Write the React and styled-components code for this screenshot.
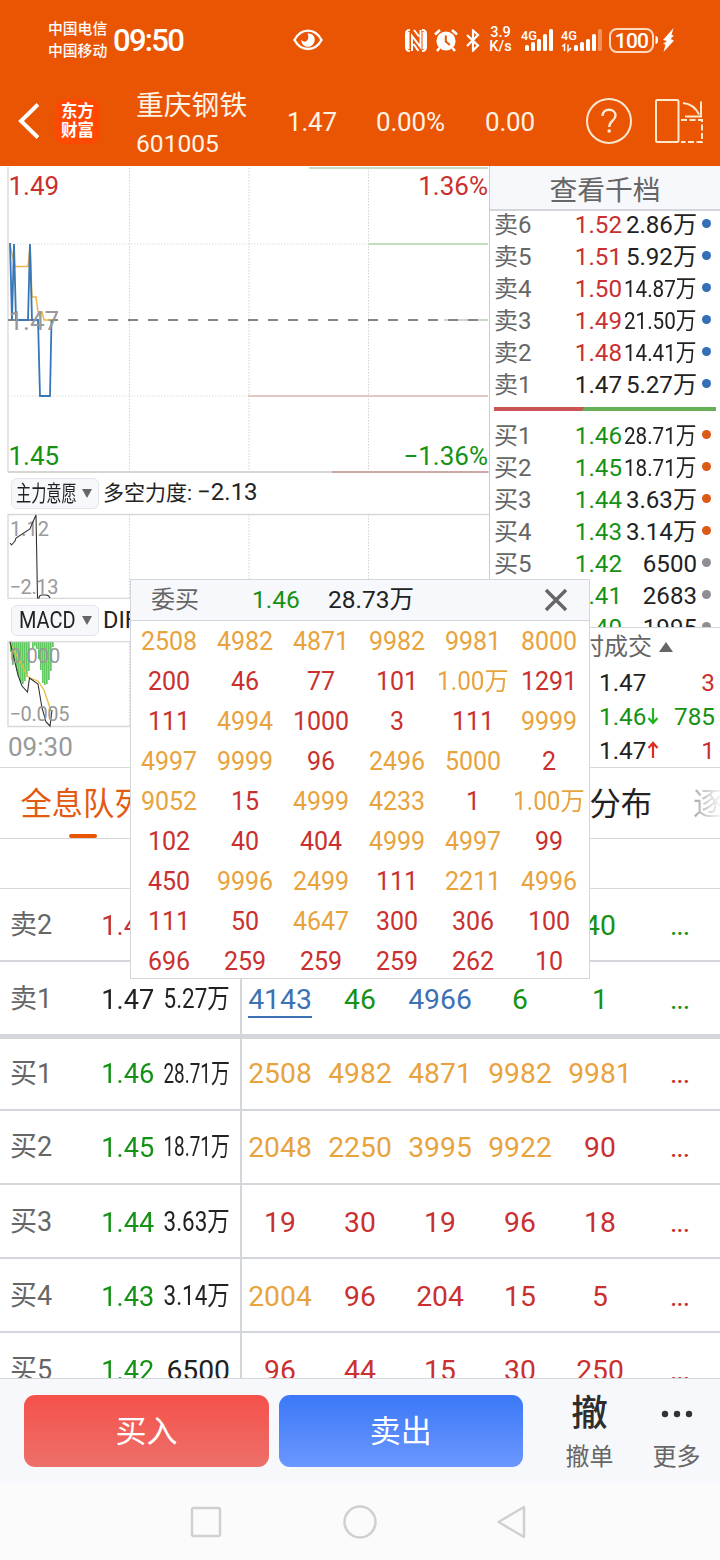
import React from 'react';
import styled, { createGlobalStyle, css } from 'styled-components';

const colors = {
  brand: '#ea5504',
  red: '#c9302f',
  green: '#159215',
  amber: '#e8a33d',
  blue: '#3c72b4',
  text: '#222',
  muted: '#666',
  faint: '#999',
  line: '#d3d6da',
  panel: '#f6f8fb',
};

const GlobalStyle = createGlobalStyle`
  * { box-sizing: border-box; }
  body {
    margin: 0;
    background: #fff;
    color: ${colors.text};
    font-family: Roboto, 'Noto Sans CJK SC', sans-serif;
  }
  svg { display: block; flex: none; }
`;

const Screen = styled.div`
  position: relative;
  width: 720px;
  height: 1560px;
  overflow: hidden;
  display: flex;
  flex-direction: column;
  white-space: nowrap;
`;

/* ---------- header ---------- */

const Header = styled.header`
  height: 166px;
  flex: none;
  background: ${colors.brand};
  color: #fff3e6;
`;

const StatusBar = styled.div`
  height: 80px;
  display: flex;
  align-items: center;
  padding-left: 48px;
  color: #fff;
`;

const Carriers = styled.div`
  width: 65px;
  font-size: 14.8px;
  font-weight: 500;
  line-height: 22.5px;
`;

const Clock = styled.div`
  width: 180px;
  font-size: 31px;
  font-weight: 500;
  letter-spacing: -1.7px;
  line-height: 36px;
  padding-top: 2px;
`;

const StatusIcons = styled.div`
  display: flex;
  align-items: center;
  margin-left: 82px;
`;

const Gap = styled.span`
  width: ${p => p.$width}px;
  flex: none;
`;

const Speed = styled.div`
  width: 29px;
  margin-left: 6px;
  margin-right: 3px;
  font-size: 14.5px;
  font-weight: 500;
  line-height: 14px;
  text-align: center;
`;

const Battery = styled.div`
  width: 45px;
  height: 25px;
  border: 2px solid #ffd9bd;
  border-radius: 8px;
  font-size: 21px;
  font-weight: 500;
  line-height: 22px;
  letter-spacing: -0.8px;
  text-align: center;
`;

const TitleBar = styled.div`
  height: 86px;
  display: flex;
  align-items: center;
  padding: 0 16px 4px 18px;
`;

const Logo = styled.div`
  width: 45px;
  height: 45px;
  margin-left: 16px;
  padding-top: 3px;
  border-radius: 11px;
  background: #ff4800;
  color: #fff;
  font-size: 16.5px;
  font-weight: 700;
  line-height: 19.5px;
  text-align: center;
`;

const StockName = styled.div`
  width: 151px;
  margin-left: 36px;
  font-size: 27.8px;
  line-height: 38px;
  padding-top: 8px;

  small {
    display: block;
    font-size: 24.6px;
  }
`;

const Quote = styled.div`
  width: ${p => p.$width}px;
  padding-top: 2px;
  font-size: 26px;
  letter-spacing: -0.2px;
  line-height: 32px;
`;

/* ---------- chart area ---------- */

const Market = styled.section`
  display: flex;
  height: 602px;
  flex: none;
  border-bottom: 1px solid ${colors.line};
`;

const Charts = styled.div`
  width: 490px;
  border-right: 1px solid #ccc;
`;

const IndicatorBar = styled.div`
  height: ${p => p.$height}px;
  display: flex;
  align-items: center;
  padding-left: 11px;
`;

const Picker = styled.div`
  width: 88px;
  height: 31px;
  margin-right: 4px;
  padding: 0 6px 0 ${p => p.$indent}px;
  display: flex;
  align-items: center;
  justify-content: space-between;
  border: 1px solid #e3e5ea;
  border-radius: 6px;
  background: ${colors.panel};
`;

const Squeezed = styled.span`
  display: inline-block;
  transform: scaleX(${p => p.$by});
  transform-origin: ${p => p.$origin || 'right'} center;
`;

const PickerLabel = styled.div`
  width: 60px;
  font-size: ${p => p.$size}px;
  line-height: 29px;
`;

const Reading = styled.div`
  padding-bottom: 2px;
  font-size: 21px;
  line-height: 30px;

  b {
    margin-left: 5px;
    font-size: 24px;
    font-weight: 400;
  }
`;

const TimeAxis = styled.div`
  height: 36px;
  padding-left: 8px;
  font-size: 26px;
  line-height: 38px;
  color: ${colors.faint};
`;

/* ---------- order book ---------- */

const Book = styled.div`
  width: 230px;
  display: flex;
  flex-direction: column;
`;

const DepthLink = styled.div`
  height: 45px;
  flex: none;
  border-bottom: 2px solid ${colors.line};
  background: ${colors.panel};
  color: ${colors.muted};
  font-size: 27.8px;
  line-height: 50px;
  text-align: center;
`;

const Levels = styled.div`
  height: ${p => p.$height}px;
  flex: none;
  margin-top: ${p => p.$shift || 0}px;
  overflow: hidden;
`;

const Level = styled.div`
  height: 32px;
  display: grid;
  grid-template-columns: 50px 78px 75px 1fr;
  padding-left: 4px;
  font-size: 24.5px;
  line-height: 32px;
`;

const LevelName = styled.span`
  font-size: 24px;
  line-height: 33px;
  color: ${colors.muted};
`;

const RightCell = styled.span`
  display: flex;
  justify-content: flex-end;
  color: ${p => p.$color || colors.text};
  font-size: ${p => p.$size || 24.5}px;
`;

const Dot = styled.i`
  width: 9px;
  height: 9px;
  margin: 10px 0 0 5px;
  border-radius: 50%;
  background: ${p => p.$color};
`;

const Balance = styled.div`
  height: 4px;
  flex: none;
  margin: 6px 4px 9px;
  background: linear-gradient(120deg, #cb5554 40%, #67b057 40.5%);
`;

const TradesHead = styled.div`
  height: 38px;
  flex: none;
  display: flex;
  align-items: center;
  gap: 7px;
  padding-left: 66px;
  border-top: 1px solid ${colors.line};
  color: ${colors.muted};
  font-size: 24px;
  line-height: 36px;
`;

const Trade = styled.div`
  height: 34px;
  display: flex;
  align-items: center;
  padding: 0 5px 0 109px;
  color: ${p => p.$color};
  font-size: 24.3px;
`;

const TradeQty = styled.span`
  margin-left: auto;
  color: ${p => p.$color};
`;

/* ---------- tabs ---------- */

const Tabs = styled.nav`
  height: 71px;
  flex: none;
  display: flex;
  justify-content: space-between;
  padding-left: 20.5px;
  border-bottom: 1px solid ${colors.line};
  font-size: 31.3px;
  line-height: 73px;
`;

const Tab = styled.div`
  display: flex;
  flex-direction: column;
  align-items: center;
  ${p =>
    p.$active &&
    css`
      color: #e35a12;

      &::after {
        content: '';
        width: 28px;
        height: 4px;
        margin-top: -7px;
        border-radius: 2px;
        background: ${colors.brand};
      }
    `}
`;

const FadingTab = styled.div`
  width: 27px;
  margin-left: 41px;
  overflow: hidden;
  color: transparent;
  background: linear-gradient(90deg, #aaa, #f4f4f4);
  background-clip: text;
`;

const TabGroup = styled.div`
  display: flex;
`;

/* ---------- queue table ---------- */

const Queue = styled.section`
  height: 539px;
  flex: none;
  overflow: hidden;
  padding-top: 49px;
`;

const QueueRows = styled.div`
  border-top: 1px solid ${colors.line};
`;

const QueueRow = styled.div`
  height: ${p => p.$height || 74}px;
  display: grid;
  grid-template-columns: 90px 54px 76px 12px repeat(6, 80px);
  padding-left: 10px;
  margin-right: -20px;
  border-bottom: ${p => (p.$thick ? 5 : 2)}px solid ${colors.line};
  font-size: 28.3px;
  line-height: ${p => p.$line || 73}px;
`;

const QueueName = styled.span`
  font-size: 27px;
  color: ${colors.muted};
`;

const Divider = styled.span`
  width: 2px;
  background: ${colors.line};
  margin-left: 10px;
`;

const QueueCell = styled.span`
  text-align: center;
  margin: 0 0 0 -4px;
  color: ${p => p.$color};

  u {
    text-decoration: none;
    border-bottom: 2px solid ${colors.blue};
  }
`;

const MoreCell = styled.span`
  margin: 2px 0 -4px -4px;
  font-size: 23px;
  font-weight: 500;
  text-align: center;
  color: ${p => p.$color};
`;

/* ---------- popup ---------- */

const Popup = styled.div`
  position: absolute;
  left: 130px;
  top: 579px;
  width: 460px;
  height: 400px;
  overflow: hidden;
  border: 1px solid ${colors.line};
  background: #fff;
`;

const PopupHead = styled.div`
  height: 41px;
  display: flex;
  align-items: center;
  padding: 0 21px 0 20px;
  border-bottom: 1px solid ${colors.line};
  background: ${colors.panel};
  font-size: 25px;
  line-height: 42px;
`;

const HeadText = styled.span`
  width: ${p => p.$width}px;
  font-size: ${p => p.$size || 24.5}px;
  color: ${p => p.$color};
`;

const Orders = styled.div`
  display: grid;
  grid-template-columns: repeat(6, 76px);
  grid-auto-rows: 40px;
  font-size: 25px;
  line-height: 42px;
  text-align: center;
`;

const Order = styled.span`
  display: flex;
  justify-content: center;
  color: ${p => p.$color};
`;

/* ---------- bottom ---------- */

const ActionBar = styled.footer`
  height: 105px;
  flex: none;
  display: flex;
  padding: 16px 0 0 24px;
  border-top: 1px solid ${colors.line};
  background: ${colors.panel};
`;

const ActionButton = styled.div`
  width: ${p => p.$width}px;
  height: 72px;
  margin-right: 10px;
  border-radius: 11px;
  background: linear-gradient(${p => p.$from}, ${p => p.$to});
  color: #fff;
  font-size: 31px;
  line-height: 74px;
  text-align: center;
`;

const Action = styled.div`
  width: 87px;
  display: flex;
  flex-direction: column;
  align-items: center;
  color: ${colors.muted};
  font-size: 24px;
  line-height: 50px;
`;

const ActionIcon = styled.div`
  height: 37px;
  display: flex;
  align-items: center;
  color: #2d2d2d;
  font-size: 36.5px;
  font-weight: 500;
`;

const SystemNav = styled.div`
  flex: 1;
  display: flex;
  justify-content: center;
  align-items: center;
  gap: 120.5px;
  padding-right: 3px;
  background: #fbfbfb;
`;

/* ---------- data ---------- */

const sells = [
  ['卖6', '1.52', '2.86万', 1],
  ['卖5', '1.51', '5.92万', 1],
  ['卖4', '1.50', '14.87万', 0.88],
  ['卖3', '1.49', '21.50万', 0.88],
  ['卖2', '1.48', '14.41万', 0.88],
  ['卖1', '1.47', '5.27万', 1],
];

const buys = [
  ['买1', '1.46', '28.71万', 0.88, '#dd5a14'],
  ['买2', '1.45', '18.71万', 0.88, '#dd5a14'],
  ['买3', '1.44', '3.63万', 1, '#dd5a14'],
  ['买4', '1.43', '3.14万', 1, '#dd5a14'],
  ['买5', '1.42', '6500', 1, '#8e8e93'],
  ['买6', '1.41', '2683', 1, '#8e8e93'],
  ['买7', '1.40', '1995', 1, '#8e8e93'],
];

const orders = `
  2508 4982 4871 9982 9981 8000
  200 46 77 101 1.00万 1291
  111 4994 1000 3 111 9999
  4997 9999 96 2496 5000 2
  9052 15 4999 4233 1 1.00万
  102 40 404 4999 4997 99
  450 9996 2499 111 2211 4996
  111 50 4647 300 306 100
  696 259 259 259 262 10
`.trim().split(/\s+/);

const queue = [
  { name: '卖2', price: '1.48', tone: 'red', vol: '', by: 0.7, cells: ['', '', '', '', '40'], side: 'sell', height: 73, line: 73 },
  { name: '卖1', price: '1.47', tone: 'text', vol: '5.27万', by: 0.83, cells: ['4143', '46', '4966', '6', '1'], side: 'sell', height: 77, line: 75, thick: true },
  { name: '买1', price: '1.46', tone: 'green', vol: '28.71万', by: 0.7, cells: ['2508', '4982', '4871', '9982', '9981'], height: 72, line: 70 },
  { name: '买2', price: '1.45', tone: 'green', vol: '18.71万', by: 0.7, cells: ['2048', '2250', '3995', '9922', '90'] },
  { name: '买3', price: '1.44', tone: 'green', vol: '3.63万', by: 0.83, cells: ['19', '30', '19', '96', '18'], line: 75 },
  { name: '买4', price: '1.43', tone: 'green', vol: '3.14万', by: 0.83, cells: ['2004', '96', '204', '15', '5'], line: 75 },
  { name: '买5', price: '1.42', tone: 'green', vol: '6500', by: 1, cells: ['96', '44', '15', '30', '250'], line: 75 },
];

// large orders are picked out in their own colour
const isLarge = value => value.includes('万') || Number(value) >= 2000;

const orderColor = (value, side) => {
  if (side === 'sell') return isLarge(value) ? colors.blue : colors.green;
  return isLarge(value) ? colors.amber : colors.red;
};

const macdBars = [10, 23, 19, 29, 35, 40, 42, 39, 35, 29, 0, 6, 4, 7, 17, 28, 41, 43, 42, 38, 29, 5];

/* ---------- drawings ---------- */

const Eye = () => (
  <svg width="30" height="22" viewBox="0 0 30 22">
    <path d="M1.500 11C8-1.500 22-1.500 28.500 11C22 23 8 23 1.500 11Z" fill="none" stroke="#fff" strokeWidth="2.400" />
    <path d="M14.500 4.500c4.500-.5 7.500 2.500 7.200 6.500-.3 4-3.200 6.800-6.700 6.800-4 0-6.700-2.800-6.800-7.300 1.500 2.500 4.500 2.800 6 1 1.500-2 1.500-5 .3-7Z" fill="#fff" />
  </svg>
);

const Nfc = () => (
  <svg width="22" height="23" viewBox="0 0 22 23">
    <path d="M5 1Q1 1 1 5v13q0 4 4 4M17 1q4 0 4 4v13q0 4-4 4" fill="none" stroke="#fff" strokeWidth="2" />
    <path d="M3 3v17M19 3v17" stroke="#fff" strokeWidth="3" />
    <path d="M7 22V7l8.500 11V1M9 1l5 6.500M8.500 15l5 7" fill="none" stroke="#fff" strokeWidth="2" />
  </svg>
);

const Alarm = () => (
  <svg width="24" height="23" viewBox="0 0 24 23">
    <path d="M1 5.500L6 1M23 5.500L18 1M5.500 19l-2.500 3M18.500 19l2.500 3" stroke="#fff" strokeWidth="2.600" />
    <circle cx="12" cy="12" r="9.600" fill="#fff" />
    <path d="M11.800 6.500v6l4 3.500" fill="none" stroke={colors.brand} strokeWidth="2" />
  </svg>
);

const Bluetooth = () => (
  <svg width="14" height="23" viewBox="0 0 14 23">
    <path d="M1 6l11 10.500-5 5V1.500l5 4.500L1 17" fill="none" stroke="#fff" strokeWidth="2.200" />
  </svg>
);

const Signal = ({ width, weak }) => (
  <svg width={width} height="25" viewBox={`0 0 ${width} 25`}>
    <text x="0" y="11.500" fontSize="13.500" fontWeight="500" fill="#fff" textLength="16" lengthAdjust="spacingAndGlyphs">4G</text>
    {weak && <path d="M3.500 23v-6.500l-2.500 2M7 16.500v6.500l3-3" stroke="#fff" strokeWidth="1.500" fill="none" />}
    {[6, 9, 12, 17, 22].map((h, i) => (
      <rect
        key={h}
        x={(weak ? 13 : 4) + i * 6}
        y={23 - h}
        width="4"
        height={h}
        rx="1.500"
        fill="#fff"
        opacity={weak && i === 4 ? 0.35 : 1}
      />
    ))}
  </svg>
);

const Bolt = () => (
  <svg width="22" height="26" viewBox="0 0 22 26">
    <path d="M1.500 9q2.500 0 2.500 4t-2.500 4Z" fill="#fff" />
    <path d="M19.500 1L9 13l4 1-4 3 2.500.5-2 7.500 10.500-11.500-3.500-1.500 3.500-3.500-2.500-.5Z" fill="#fff" />
  </svg>
);

const Back = () => (
  <svg width="21" height="36" viewBox="0 0 21 36">
    <path d="M20 1.500L3 18l17 16.500" fill="none" stroke="#fff" strokeWidth="4" />
  </svg>
);

const Help = () => (
  <svg width="46" height="46" viewBox="0 0 46 46">
    <circle cx="23" cy="23" r="22" fill="none" stroke="#ffe8d2" strokeWidth="2" />
    <path d="M16.500 18c0-4 2.800-6.300 6.500-6.300s6.500 2.300 6.500 5.800c0 5-6.300 5.500-6.300 11.500" fill="none" stroke="#ffe8d2" strokeWidth="2.400" />
    <circle cx="23.200" cy="33" r="1.800" fill="#ffe8d2" />
  </svg>
);

const Rotate = () => (
  <svg width="49" height="46" viewBox="0 0 49 46" fill="none" stroke="#ffe9cc" strokeWidth="2">
    <rect x="1" y="2" width="22.500" height="42" rx="1.500" />
    <path d="M28 5Q39 6 44 16.500M46 3.500V18.500H30" />
    <path d="M26 22h21v22H26" strokeDasharray="6 2.500" />
  </svg>
);

const Triangle = ({ up, width = 10, height = 9 }) => (
  <svg width={width} height={height} viewBox="0 0 10 9" preserveAspectRatio="none">
    <path d={up ? 'M5 0L10 9H0Z' : 'M0 0H10L5 9Z'} fill={colors.muted} />
  </svg>
);

const Arrow = ({ up }) => (
  <svg width="14" height="18" viewBox="-1 0 14 18">
    <path
      d={up ? 'M6 17V2.500M1.500 7L6 2l4.500 5' : 'M6 1v14.500M1.500 11L6 16l4.500-5'}
      fill="none"
      stroke={up ? '#e02b20' : '#21b421'}
      strokeWidth="2.200"
    />
  </svg>
);

const Columns = ({ height }) =>
  [129.5, 249, 368.5].map(x => (
    <path key={x} d={`M${x} 2V${height}`} stroke="#d2d2d2" strokeDasharray="1.500 1.500" />
  ));

const PriceChart = () => (
  <svg width="489" height="308" viewBox="0 166 489 308" fill="none" fontSize="26">
    <g transform="translate(0 166)"><Columns height={305} /></g>
    <path d="M8 244H488M8 396H488" stroke="#dedede" strokeDasharray="1.500 1.500" />
    <path d="M8 167V472" stroke="#ddd" strokeWidth="1.500" />
    <path d="M8 472H489" stroke="#d5d5d5" strokeWidth="2" />
    <path d="M309 168H488M368 244H488M444 320H488" stroke="#c5dcc1" strokeWidth="2" />
    <path d="M248 396H488" stroke="#e3c8c6" strokeWidth="2" />
    <path d="M332 472H488" stroke="#cba9a7" strokeWidth="2" />
    <path d="M8 320H488" stroke="#858585" strokeWidth="2" strokeDasharray="10 10" />
    <path d="M10 245L15 266.500H28L30 246L32 297H36L38 312H42L44 320H52" stroke="#f0b548" strokeWidth="1.500" />
    <path d="M10 243L12 320L14 244L16 320H28L30 244L32 320H38L40 396H50L51.500 320" stroke="#3976b5" strokeWidth="1.800" />
    <text x="8.500" y="195" fill={colors.red}>1.49</text>
    <text x="8.500" y="329.500" fill={colors.faint}>1.47</text>
    <text x="8.500" y="465" fill={colors.green}>1.45</text>
    <text x="488" y="195" fill={colors.red} textAnchor="end">1.36%</text>
    <text x="488" y="465" fill={colors.green} textAnchor="end">−1.36%</text>
  </svg>
);

const ForceChart = () => (
  <svg width="489" height="86" viewBox="0 513 489 86" fill="none" fontSize="20">
    <g transform="translate(0 513)"><Columns height={85} /></g>
    <path d="M489 514.500H8V598.500H489" stroke="#d8d8d8" strokeWidth="1.300" />
    <text x="10" y="536" fill={colors.faint}>1.12</text>
    <text x="9.500" y="594" fill={colors.faint} textLength="49">−2.13</text>
    <path d="M10 543l1.500 2 3.500-4 1-3 14-9 1.500-4 4.500-10L37.500 598H39q0-3 3-3h4q3 0 4 3" stroke="#333" strokeWidth="1.100" />
  </svg>
);

const MacdChart = () => (
  <svg width="489" height="87" viewBox="0 641 489 87" fill="none" fontSize="20">
    <g transform="translate(0 641)"><Columns height={85} /></g>
    {macdBars.map((h, i) => (
      <rect key={i} x={10 + i * 2} y="642" width="1.700" height={h} fill="#62c862" />
    ))}
    <path d="M489 641.500H8V726.500H489" stroke="#d8d8d8" strokeWidth="1.300" />
    <path d="M10 642l4 9 6 10 7 15 3 2 8 3 6 9 4 12 3 9" stroke="#e6bb45" strokeWidth="1.300" />
    <path d="M10 642l3 12 5 21 4 11 5.500 6 2-14 8.500 6 4 24 4 14 4 4 2-16" stroke="#333" strokeWidth="1.100" />
    <text x="10" y="663" fill={colors.faint}>0.000</text>
    <text x="9.500" y="721" fill={colors.faint} textLength="60">−0.005</text>
  </svg>
);

/* ---------- page ---------- */

const BookLevel = ({ row: [name, price, vol, by, dot = '#336fb7'], color }) => (
  <Level>
    <LevelName>{name}</LevelName>
    <RightCell $color={color} $size={24.2}>{price}</RightCell>
    <RightCell $size={by < 1 ? 23.5 : 24.1}>
      <Squeezed $by={by}>{vol}</Squeezed>
    </RightCell>
    <Dot $color={dot} />
  </Level>
);

export default function App() {
  return (
    <Screen>
      <GlobalStyle />
      <Header>
        <StatusBar>
          <Carriers>
            <div>中国电信</div>
            <div>中国移动</div>
          </Carriers>
          <Clock>09:50</Clock>
          <Eye />
          <StatusIcons>
            <Nfc />
            <Gap $width={7} />
            <Alarm />
            <Gap $width={8} />
            <Bluetooth />
            <Speed>
              <div>3.9</div>
              <div>K/s</div>
            </Speed>
            <Gap $width={3} />
            <Signal width={40} />
            <Signal width={48} weak />
            <Battery>100</Battery>
            <Bolt />
          </StatusIcons>
        </StatusBar>
        <TitleBar>
          <Back />
          <Logo>
            <div>东方</div>
            <div>财富</div>
          </Logo>
          <StockName>
            重庆钢铁
            <small>601005</small>
          </StockName>
          <Quote $width={89}>1.47</Quote>
          <Quote $width={109}>0.00%</Quote>
          <Quote $width={101}>0.00</Quote>
          <Help />
          <Gap $width={23} />
          <Rotate />
        </TitleBar>
      </Header>

      <Market>
        <Charts>
          <PriceChart />
          <IndicatorBar $height={39}>
            <Picker $indent={4}>
              <PickerLabel $size={22}>
                <Squeezed $by={0.69} $origin="left">主力意愿</Squeezed>
              </PickerLabel>
              <Triangle />
            </Picker>
            <Reading>多空力度:<b>−2.13</b></Reading>
          </IndicatorBar>
          <ForceChart />
          <IndicatorBar $height={42}>
            <Picker $indent={7}>
              <PickerLabel $size={23.5}>
                <Squeezed $by={0.85} $origin="left">MACD</Squeezed>
              </PickerLabel>
              <Triangle />
            </Picker>
            <HeadText $size={23.5}>DIF</HeadText>
          </IndicatorBar>
          <MacdChart />
          <TimeAxis>09:30</TimeAxis>
        </Charts>

        <Book>
          <DepthLink>查看千档</DepthLink>
          <Levels $height={192} $shift={-2}>
            {sells.map(row => (
              <BookLevel key={row[0]} row={row} color={row[1] === '1.47' ? colors.text : colors.red} />
            ))}
          </Levels>
          <Balance />
          <Levels $height={207}>
            {buys.map(row => (
              <BookLevel key={row[0]} row={row} color={colors.green} />
            ))}
          </Levels>
          <TradesHead>
            分时成交
            <Triangle up width={14} height={10} />
          </TradesHead>
          <Trade $color={colors.text}>
            1.47<TradeQty $color={colors.red}>3</TradeQty>
          </Trade>
          <Trade $color={colors.green}>
            1.46<Arrow /><TradeQty>785</TradeQty>
          </Trade>
          <Trade $color={colors.text}>
            1.47<Arrow up /><TradeQty $color={colors.red}>1</TradeQty>
          </Trade>
        </Book>
      </Market>

      <Tabs>
        <Tab $active>全息队列</Tab>
        <TabGroup>
          <Tab>分布</Tab>
          <FadingTab>逐</FadingTab>
        </TabGroup>
      </Tabs>

      <Queue>
        <QueueRows>
          {queue.map(row => (
            <QueueRow key={row.name} $height={row.height} $line={row.line} $thick={row.thick}>
              <QueueName>{row.name}</QueueName>
              <RightCell $color={colors[row.tone]} $size={28.3}>
                <Squeezed $by={0.96}>{row.price}</Squeezed>
              </RightCell>
              <RightCell $size={row.by < 1 ? 27 : 28.3}>
                <Squeezed $by={row.by}>{row.vol}</Squeezed>
              </RightCell>
              <Divider />
              {row.cells.map((cell, i) => (
                <QueueCell key={i} $color={orderColor(cell, row.side)}>
                  {cell === '4143' ? <u>{cell}</u> : cell}
                </QueueCell>
              ))}
              <MoreCell $color={row.side === 'sell' ? colors.green : colors.red}>...</MoreCell>
            </QueueRow>
          ))}
        </QueueRows>
      </Queue>

      <ActionBar>
        <ActionButton $width={245} $from="#f5514a" $to="#ed706a">买入</ActionButton>
        <ActionButton $width={244} $from="#3b78f8" $to="#6b97fd">卖出</ActionButton>
        <Gap $width={13.5} />
        <Action>
          <ActionIcon>撤</ActionIcon>
          撤单
        </Action>
        <Action>
          <ActionIcon>
            <svg width="32" height="8" viewBox="0 0 32 8" fill="#333">
              <circle cx="4" cy="4" r="3.200" />
              <circle cx="16" cy="4" r="3.200" />
              <circle cx="28" cy="4" r="3.200" />
            </svg>
          </ActionIcon>
          更多
        </Action>
      </ActionBar>
      <SystemNav>
        <svg width="32" height="32" viewBox="0 0 32 32" fill="none" stroke="#d0d0d0" strokeWidth="2.500">
          <rect x="2" y="2" width="28" height="28" rx="1.500" />
        </svg>
        <svg width="34" height="34" viewBox="0 0 34 34" fill="none" stroke="#d0d0d0" strokeWidth="2.500">
          <circle cx="17" cy="17" r="15.500" />
        </svg>
        <svg width="30" height="34" viewBox="0 0 30 34" fill="none" stroke="#d0d0d0" strokeWidth="2.500">
          <path d="M27 2v30L1.500 17Z" strokeLinejoin="round" />
        </svg>
      </SystemNav>

      <Popup>
        <PopupHead>
          <HeadText $width={101} $size={24} $color={colors.muted}>委买</HeadText>
          <HeadText $width={76} $color={colors.green}>1.46</HeadText>
          <HeadText $width={216} $color={colors.text}>28.73万</HeadText>
          <svg width="24" height="24" viewBox="0 0 24 24">
            <path d="M2 2l20 20M22 2L2 22" stroke="#666" strokeWidth="3.400" />
          </svg>
        </PopupHead>
        <Orders>
          {orders.map((value, i) => (
            <Order key={i} $color={orderColor(value)}>
              <Squeezed $by={value.includes('万') ? 0.97 : 1} $origin="center">{value}</Squeezed>
            </Order>
          ))}
        </Orders>
      </Popup>
    </Screen>
  );
}
